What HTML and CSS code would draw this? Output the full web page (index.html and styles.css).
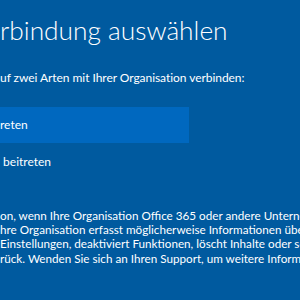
FILE: index.html
```html
<!DOCTYPE html>
<html lang="de">
<head>
<meta charset="utf-8">
<link rel="stylesheet" href="styles.css">
</head>
<body>
<main class="page">
  <h1 class="title">rbindung auswählen</h1>
  <p class="intro">uf zwei Arten mit Ihrer Organisation verbinden:</p>
  <div class="options">
    <div class="option selected">reten</div>
    <div class="option"> beitreten</div>
  </div>
  <div class="info">
    <p class="line">on, wenn Ihre Organisation Office 365 oder andere Unternehmensdienste</p>
    <p class="line">hre Organisation erfasst möglicherweise Informationen über</p>
    <p class="line">Einstellungen, deaktiviert Funktionen, löscht Inhalte oder setzt</p>
    <p class="line">rück. Wenden Sie sich an Ihren Support, um weitere Informationen</p>
  </div>
</main>
</body>
</html>
```
FILE: styles.css
```css
html, body {
  margin: 0;
  padding: 0;
  width: 300px;
  height: 300px;
  overflow: hidden;
  background: #005a9f;
}
.page {
  color: #ffffff;
  font-family: "Lato", "Noto Sans", sans-serif;
  white-space: nowrap;
  overflow: hidden;
  width: 300px;
  height: 300px;
}
.title {
  margin: 0;
  padding-top: 12px;
  font-size: 26.3px;
  font-weight: 300;
  line-height: 36px;
}
.intro {
  margin: 20px 0 0 0;
  font-size: 12px;
  letter-spacing: -0.05px;
  line-height: 20px;
}
.options {
  margin-top: 19px;
  display: flex;
  flex-direction: column;
  gap: 1px;
}
.option {
  height: 36px;
  line-height: 36px;
  font-size: 12px;
  width: 189px;
  white-space: pre;
}
.selected {
  background: #0068bf;
}
.info {
  margin-top: 28px;
}
.line {
  margin: 0;
  font-size: 11.7px;
  line-height: 14.2px;
  overflow: hidden;
}
```
